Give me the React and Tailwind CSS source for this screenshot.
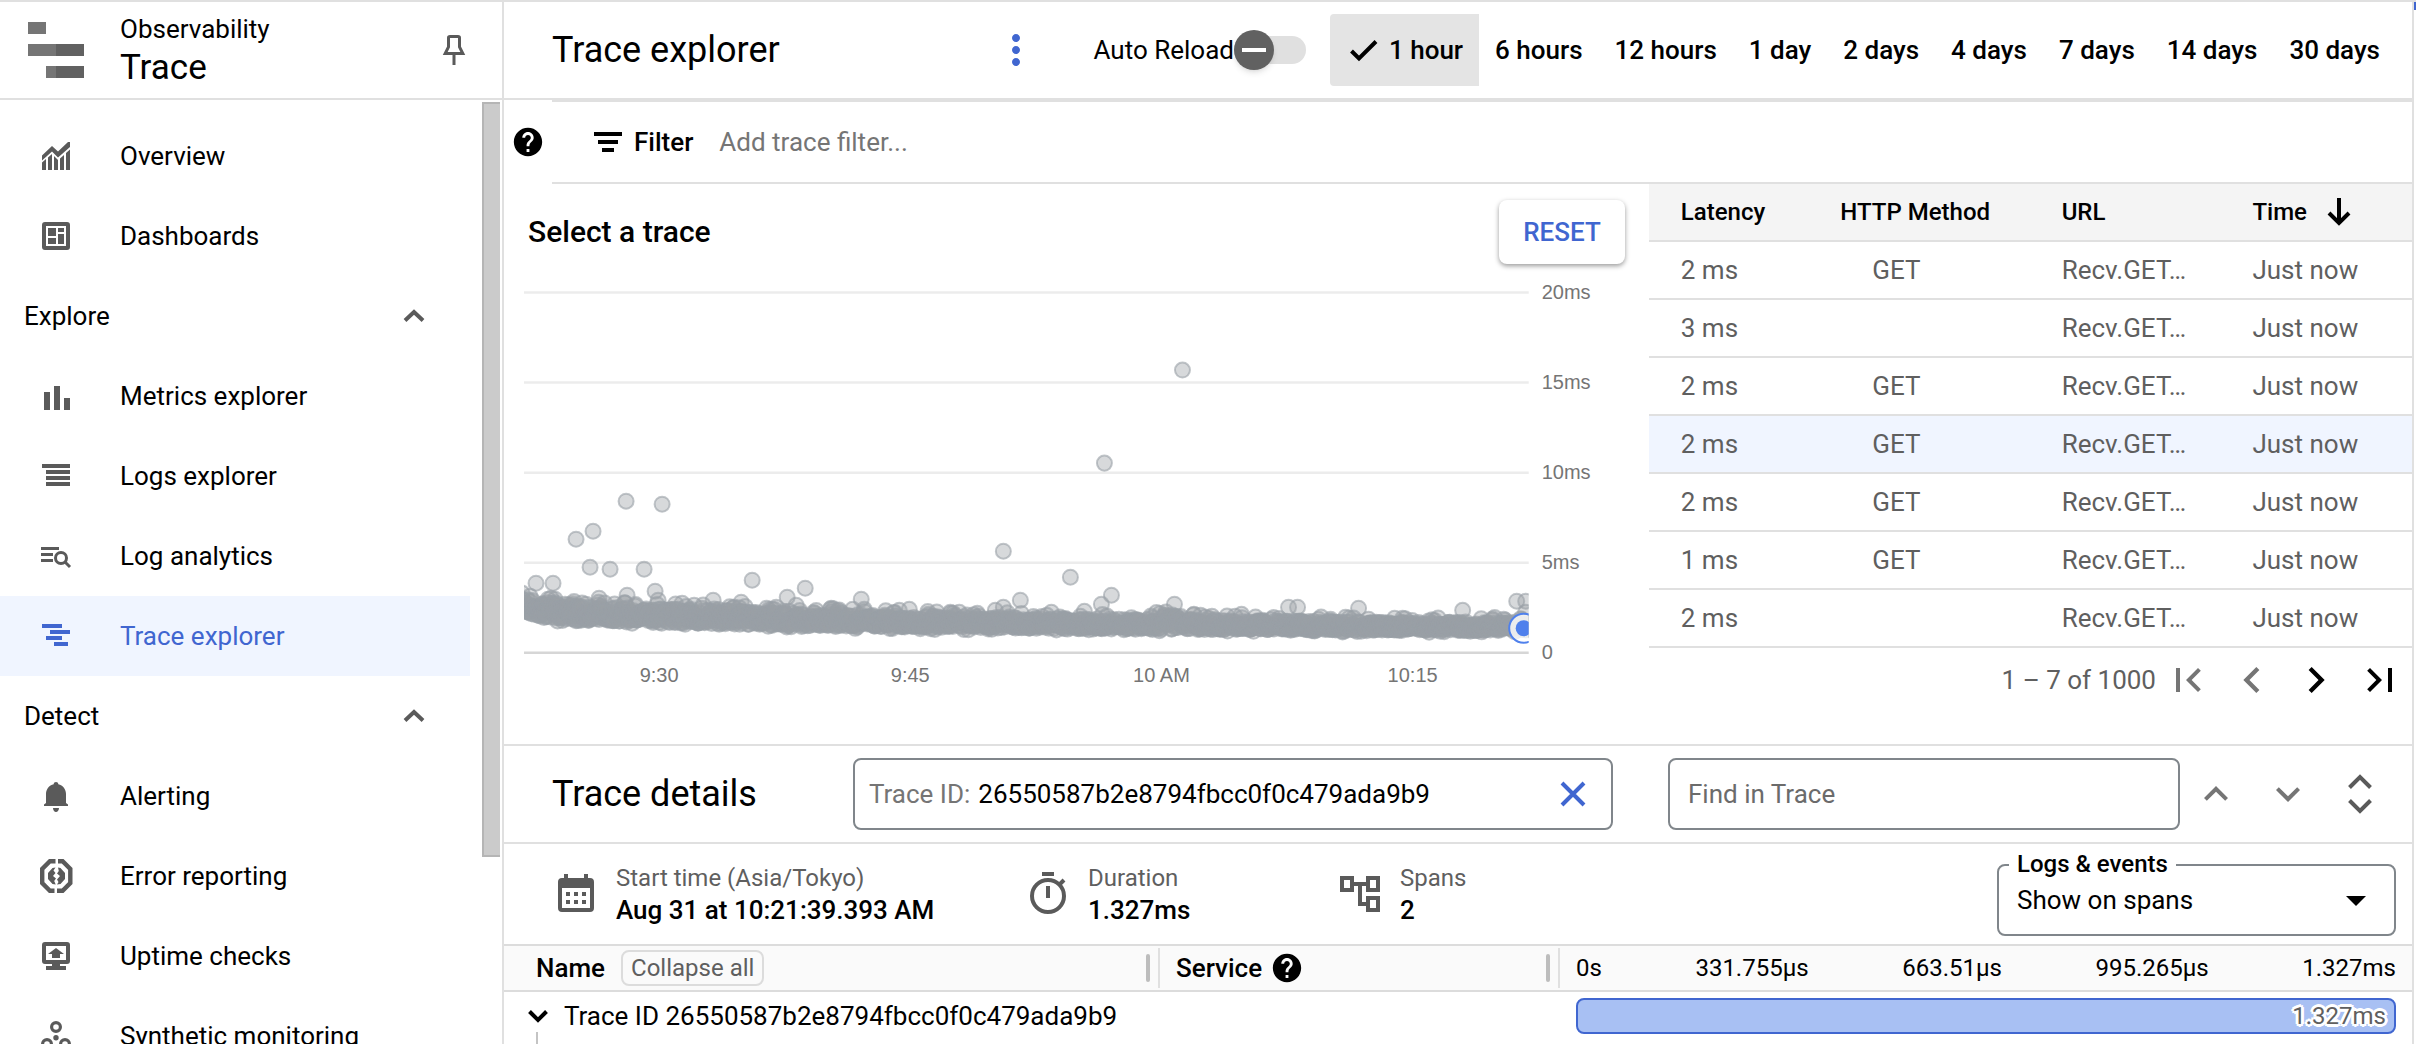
import React, { useState } from 'react';
import {
  MdHelp,
  MdMoreVert,
  MdFirstPage,
  MdLastPage,
  MdChevronLeft,
  MdChevronRight,
  MdExpandLess,
  MdExpandMore,
  MdArrowDropDown
} from 'react-icons/md';

const NavIcon = ({ children }) => (
  <svg viewBox="0 0 36 36" className="size-9 shrink-0" fill="currentColor" aria-hidden="true">
    {children}
  </svg>
);

const LineIcon = ({ d }) => (
  <svg viewBox="0 0 36 36" className="size-9 shrink-0" fill="none" stroke="currentColor" strokeWidth="4" aria-hidden="true">
    <path d={d} />
  </svg>
);

const icons = {
  overview: (
    <NavIcon>
      <path d="M4 17.5 14 8l6 5.5L30 4h2v5L20 19.5l-6-6-10 9z" />
      <path d="M4 24.5 8 21v11H4zM10 19.5l4-3.5v16h-4zM16 18l4 4v10h-4zM22 20.500l4-3.500v15h-4zM28 15l4-3.500V32h-4z" />
    </NavIcon>
  ),
  dashboards: (
    <NavIcon>
      <rect x="6" y="6" width="24" height="24" rx="1" fill="none" stroke="currentColor" strokeWidth="4" />
      <path d="M10 10h8v8h-8zM10 20h8v6h-8zM20 10h6v4h-6zM20 16h6v10h-6z" />
    </NavIcon>
  ),
  metrics: (
    <NavIcon>
      <path d="M6 14h6v18H6zM16 8h6v24h-6zM26 20h6v12h-6z" />
    </NavIcon>
  ),
  logs: (
    <NavIcon>
      <path d="M4 6h28v4H4zM8 12h24v4H8zM8 18h24v4H8zM8 24h24v4H8z" />
    </NavIcon>
  ),
  analytics: (
    <NavIcon>
      <path d="M3 9h18v3H3zM3 15h12v3H3zM3 21h12v3H3z" />
      <circle cx="23" cy="20" r="5.500" fill="none" stroke="currentColor" strokeWidth="3" />
      <path d="m26.500 23.500 5.500 5.500" stroke="currentColor" strokeWidth="3" />
    </NavIcon>
  ),
  trace: (
    <NavIcon>
      <path d="M4 6h20v4H4zM12 12h20v4H12zM8 18h16v4H8zM16 24h14v4H16z" />
    </NavIcon>
  ),
  alerting: (
    <NavIcon>
      <path d="M18 4c1.300 0 2.300.9 2.300 2.200 4.700 1.200 7.700 5 7.700 9.800v9l2 1.500V28H6v-1.500L8 25v-9c0-4.800 3-8.600 7.700-9.800C15.700 4.900 16.700 4 18 4zM15 30h6c0 2.200-1.300 4-3 4s-3-1.800-3-4z" />
    </NavIcon>
  ),
  errors: (
    <NavIcon>
      <path
        d="M17.500 3.200h-5.600L4.200 11v14l7.700 7.800h4.600M19 32.800h5.600l7.700-7.800V11l-7.700-7.800H20"
        fill="none"
        stroke="currentColor"
        strokeWidth="4.400"
      />
      <path d="M17.500 9.500 14.500 10 10 15v6l4.500 5 3.200.5-1.500-3.500 1.800-2.500-3-2.500 2.500-3-2-2.500zM20 9.500l2.500.5 4.500 5v6l-4.500 5-3.500.5 1.500-2.500-1.500-2.500 3-3.500-3-2.500 1.800-2.500z" />
    </NavIcon>
  ),
  uptime: (
    <NavIcon>
      <rect x="6" y="6" width="24" height="18" rx="1" fill="none" stroke="currentColor" strokeWidth="4" />
      <path d="M14 25h8v3h6v4H8v-4h6zM18 10l8 6h-4v4h-8v-4h-4z" />
    </NavIcon>
  ),
  synthetic: (
    <NavIcon>
      <g fill="none" stroke="currentColor" strokeWidth="3.200">
        <circle cx="18" cy="9" r="4.400" />
        <circle cx="9" cy="26" r="4.400" />
        <circle cx="27" cy="26" r="4.400" />
      </g>
      <circle cx="18" cy="19.700" r="2.700" />
    </NavIcon>
  )
};

const navGroups = [
  {
    items: [
      { label: 'Overview', icon: icons.overview },
      { label: 'Dashboards', icon: icons.dashboards }
    ]
  },
  {
    title: 'Explore',
    items: [
      { label: 'Metrics explorer', icon: icons.metrics },
      { label: 'Logs explorer', icon: icons.logs },
      { label: 'Log analytics', icon: icons.analytics },
      { label: 'Trace explorer', icon: icons.trace, active: true }
    ]
  },
  {
    title: 'Detect',
    items: [
      { label: 'Alerting', icon: icons.alerting },
      { label: 'Error reporting', icon: icons.errors },
      { label: 'Uptime checks', icon: icons.uptime },
      { label: 'Synthetic monitoring', icon: icons.synthetic }
    ]
  }
];

const Sidebar = () => (
  <aside className="flex w-[504px] shrink-0 flex-col border-r-2 border-[#e0e0e0]">
    <div className="flex h-[98px] shrink-0 items-center border-b-2 border-[#e0e0e0] pr-9 pl-7">
      <svg viewBox="0 0 56 56" className="size-14 shrink-0" aria-hidden="true">
        <path d="M0 0h18v12H0zM0 22h28v12H0zM18 44h10v12H18z" fill="#757575" />
        <path d="M28 22h28v12H28zM28 44h28v12H28z" fill="#616161" />
      </svg>
      <div className="ml-9 flex-1">
        <p className="text-[26px] leading-9">Observability</p>
        <p className="text-[35px] leading-[42px]">Trace</p>
      </div>
      <button type="button" aria-label="Pin menu" className="text-[#5a5a5a]">
        <svg viewBox="0 0 24 32" className="h-8 w-6" fill="none" stroke="currentColor" strokeWidth="3">
          <path d="M6.500 3.800Q6.500 2.500 8 2.500h8q1.500 0 1.500 1.300V13l3.300 6.500H3.200L6.500 13zM12 19.500V31" />
        </svg>
      </button>
    </div>
    <div className="flex min-h-0 flex-1 justify-between">
      <nav className="w-[470px] overflow-hidden pt-4">
        {navGroups.map((group, idx) => (
          <div key={idx}>
            {group.title && (
              <button type="button" className="flex h-20 w-full items-center justify-between pr-11 pl-6 text-[26px]">
                {group.title}
                <svg viewBox="0 0 24 16" className="h-4 w-6 text-[#5a5a5a]" fill="none" stroke="currentColor" strokeWidth="4">
                  <path d="m3 12.500 9-8.500 9 8.500" />
                </svg>
              </button>
            )}
            {group.items.map((item) => (
              <a
                key={item.label}
                href="#"
                className={`flex h-20 items-center gap-[46px] pl-[38px] text-[26px] whitespace-nowrap ${
                  item.active ? 'bg-[#f0f5ff] text-[#4066d0]' : ''
                }`}
              >
                <span className={item.active ? '' : 'text-[#5a5a5a]'}>{item.icon}</span>
                {item.label}
              </a>
            ))}
          </div>
        ))}
      </nav>
      <div className="mt-0.5 mr-0.5 h-4/5 w-[18px] border-y-2 border-l-2 border-[#b5b5b5] bg-[#cbcbcb]" />
    </div>
  </aside>
);

const ranges = ['1 hour', '6 hours', '12 hours', '1 day', '2 days', '4 days', '7 days', '14 days', '30 days'];

const TopBar = () => {
  const [range, setRange] = useState('1 hour');
  const [autoReload, setAutoReload] = useState(false);

  return (
    <header className="flex h-[98px] shrink-0 items-center border-b-2 border-[#e0e0e0] pr-4 pl-12">
      <h1 className="flex-1 text-4xl">Trace explorer</h1>
      <button type="button" aria-label="More actions" className="mr-[54px] text-[#4066d0]">
        <MdMoreVert className="size-12" />
      </button>
      <label className="mr-6 flex items-center text-[26px]">
        Auto Reload
        <input
          type="checkbox"
          checked={autoReload}
          onChange={(e) => setAutoReload(e.target.checked)}
          className="peer sr-only"
        />
        <span className="flex h-7 w-[72px] items-center rounded-full bg-[#e0e0e0]">
          <span className="flex size-10 items-center justify-center rounded-full bg-[#616161] shadow-md">
            <span className="h-1 w-6 bg-white" />
          </span>
        </span>
      </label>
      <div className="flex">
        {ranges.map((r) => (
          <button
            key={r}
            type="button"
            onClick={() => setRange(r)}
            className={`flex h-[72px] items-center gap-[7px] px-4 text-[26px] font-medium whitespace-nowrap ${
              r === range ? 'rounded-l bg-[#e4e4e4]' : ''
            }`}
          >
            {r === range && <LineIcon d="m5.500 19 7.500 7.500 17-17" />}
            {r}
          </button>
        ))}
      </div>
    </header>
  );
};

const FilterBar = () => (
  <div className="flex shrink-0 items-center">
    <button type="button" aria-label="Help" className="flex w-12 justify-center">
      <MdHelp className="size-[34px]" />
    </button>
    <div className="flex h-[84px] flex-1 items-center border-y-2 border-[#e0e0e0] pl-[38px]">
      <LineIcon d="M4 10h28M8 18h20M12 26h12" />
      <label htmlFor="trace-filter" className="ml-2 text-[26px] font-medium">Filter</label>
      <input
        id="trace-filter"
        type="text"
        placeholder="Add trace filter..."
        className="ml-[26px] flex-1 text-[26px] outline-none placeholder:text-[#757575]"
      />
    </div>
  </div>
);

// Outliers above the dense latency band, in chart units
const outliers = [
  [626, 501], [662, 504], [576, 539], [593, 531], [590, 567], [610, 569], [644, 569], [536, 583],
  [553, 583], [752, 580], [805, 588], [787, 597], [861, 599], [1003, 551], [1070, 577], [1020, 600],
  [655, 591], [627, 595], [599, 598], [658, 600], [530, 596], [555, 599], [713, 600], [741, 602],
  [682, 603], [694, 605], [1003, 607], [831, 608], [864, 609], [909, 609], [796, 605], [565, 604],
  [586, 604], [772, 609], [899, 610], [928, 614], [1051, 612], [1084, 611], [995, 610], [977, 613],
  [1182, 370], [1104, 463], [1111, 595], [1101, 604], [1174, 604], [1241, 614], [1288, 607],
  [1297, 607], [1358, 608], [1462, 610], [1516, 601], [1525, 601], [1525, 612], [1345, 617],
  [1200, 615], [1262, 620], [1330, 619], [1394, 618], [1402, 618], [1492, 620], [1503, 619]
];

const buildBand = () => {
  let seed = 7;
  const rand = () => {
    seed = (seed * 16807) % 2147483647;
    return seed / 2147483647;
  };
  const points = [];
  for (let x = 522; x < 1530; x += 0.5) {
    const t = (x - 524) / 1004;
    const bump = 5 * Math.exp(-(((x - 1170) / 18) ** 2));
    const edge = 9 * Math.exp(-(x - 522) / 12);
    const top = 602 + 21 * (1 - Math.exp(-2.4 * t)) + 1.5 * t - bump - edge;
    const bottom = 618 + 13 * (1 - Math.exp(-3 * t)) - edge;
    let y = top + (bottom - top) * Math.pow(rand(), 0.8);
    // a few stragglers roughen both edges of the band
    const stray = rand();
    if (stray < 0.05) y = top - rand() * 5;
    if (stray > 0.97) y = bottom + rand() * 2;
    points.push([x, y]);
  }
  return points;
};

const band = buildBand();

const LatencyChart = () => (
  <svg viewBox="504 280 1144 412" className="w-full" role="img" aria-label="Trace latency">
    <defs>
      <clipPath id="plot">
        <rect x="524" y="280" width="1004" height="373" />
      </clipPath>
    </defs>
    <g fontFamily="'Liberation Sans', Arial, sans-serif" fontSize="20" fill="#757575">
      {['20ms', '15ms', '10ms', '5ms', '0'].map((label, i) => (
        <g key={label}>
          <path d={`M524 ${292.5 + i * 90}h1004`} stroke={i === 4 ? '#d6d6d6' : '#ececec'} strokeWidth="2.500" />
          <text x="1541" y={299 + i * 90}>{label}</text>
        </g>
      ))}
      {[['9:30', 659], ['9:45', 910], ['10 AM', 1161], ['10:15', 1412]].map(([label, x]) => (
        <text key={label} x={x} y="682" textAnchor="middle">{label}</text>
      ))}
    </g>
    <g clipPath="url(#plot)">
      <g fill="#9aa0a6" fillOpacity="0.4" stroke="#9aa0a6" strokeOpacity="0.6" strokeWidth="2">
        {outliers.concat(band).map(([x, y], i) => (
          <circle key={i} cx={x} cy={y} r="7.500" />
        ))}
      </g>
      <circle cx="1523" cy="628" r="14.500" fill="#fff" fillOpacity="0.8" stroke="#4f80ec" strokeWidth="2" />
      <circle cx="1523" cy="628" r="8" fill="#4f80ec" />
    </g>
  </svg>
);

const traces = [
  { latency: '2 ms', method: 'GET' },
  { latency: '3 ms', method: '' },
  { latency: '2 ms', method: 'GET' },
  { latency: '2 ms', method: 'GET', selected: true },
  { latency: '2 ms', method: 'GET' },
  { latency: '1 ms', method: 'GET' },
  { latency: '2 ms', method: '' }
];

const TraceTable = () => (
  <div className="w-2/5">
    <table className="w-full table-fixed border-separate border-spacing-0 text-left">
      <thead className="bg-[#f4f4f4] text-2xl">
        <tr className="h-[58px] *:border-b-2 *:border-[#e0e0e0] *:p-0 *:font-medium">
          <th className="w-[23%]"><span className="pl-8">Latency</span></th>
          <th className="w-[29%]"><span className="pl-4">HTTP Method</span></th>
          <th className="w-[25%]"><span className="pl-4">URL</span></th>
          <th>
            <button type="button" className="flex items-center gap-3.5 pl-4">
              Time <LineIcon d="M18 4v25M8 19l10 10 10-10" />
            </button>
          </th>
        </tr>
      </thead>
      <tbody className="text-[26px] text-[#5f5f5f]">
        {traces.map((trace, idx) => (
          <tr
            key={idx}
            className={`h-[58px] *:border-b-2 *:border-[#e0e0e0] *:py-0 ${trace.selected ? 'bg-[#f0f5ff]' : ''}`}
          >
            <td className="pl-8">{trace.latency}</td>
            <td className="pl-12">{trace.method}</td>
            <td className="pl-4">Recv.GET…</td>
            <td className="pl-4">Just now</td>
          </tr>
        ))}
      </tbody>
    </table>
    <div className="flex h-16 items-center justify-end text-[26px] text-[#5f5f5f]">
      <span>1 – 7 of 1000</span>
      <button type="button" aria-label="First page" disabled className="flex w-16 justify-center text-[#757575]">
        <MdFirstPage className="size-12" />
      </button>
      <button type="button" aria-label="Previous page" disabled className="flex w-16 justify-center text-[#757575]">
        <MdChevronLeft className="size-[52px]" />
      </button>
      <button type="button" aria-label="Next page" className="flex w-16 justify-center text-black">
        <MdChevronRight className="size-[52px]" />
      </button>
      <button type="button" aria-label="Last page" className="flex w-16 justify-center text-black">
        <MdLastPage className="size-12" />
      </button>
    </div>
  </div>
);

const CalendarIcon = () => (
  <svg viewBox="0 0 48 48" className="size-12" fill="currentColor" aria-hidden="true">
    <path d="M12 4h4v4h16V4h4v4h2q4 0 4 4v26q0 4-4 4H10q-4 0-4-4V12q0-4 4-4h2zM10 18v20h28V18z" fillRule="evenodd" />
    <path d="M14 22h4v4h-4zM22 22h4v4h-4zM30 22h4v4h-4zM14 30h4v4h-4zM22 30h4v4h-4zM30 30h4v4h-4z" />
  </svg>
);

const StopwatchIcon = () => (
  <svg viewBox="0 0 48 48" className="size-12" fill="none" stroke="currentColor" strokeWidth="4" aria-hidden="true">
    <circle cx="24" cy="26" r="16" />
    <path d="M18 4h12M24 16v12M36 14l4-4" />
  </svg>
);

const SpansIcon = () => (
  <svg viewBox="0 0 48 48" className="size-12" fill="none" stroke="currentColor" strokeWidth="4" aria-hidden="true">
    <path d="M6 8h10v12H6zM32 8h10v12H32zM32 28h10v12H32zM16 14h16M24 14v20h8" />
  </svg>
);

const Fact = ({ icon, label, value, className }) => (
  <div className={`flex items-center gap-4 ${className}`}>
    <span className="text-[#5a5a5a]">{icon}</span>
    <div className="leading-8 whitespace-nowrap">
      <p className="text-2xl/8 text-[#5f5f5f]">{label}</p>
      <p className="text-[26px]/8 font-medium">{value}</p>
    </div>
  </div>
);

const TraceDetails = () => (
  <section className="flex min-h-0 flex-1 flex-col border-t-2 border-[#e0e0e0]">
    <div className="flex h-[98px] shrink-0 items-center border-b-2 border-[#e0e0e0] pr-4 pl-12">
      <h2 className="w-[301px] text-4xl">Trace details</h2>
      <div className="mr-[55px] flex h-[72px] flex-1 items-center rounded-lg border-2 border-[#80868b] pr-5 pl-3.5 text-[26px]">
        <label htmlFor="trace-id" className="text-[#757575]">Trace ID:</label>
        <input
          id="trace-id"
          type="text"
          defaultValue="26550587b2e8794fbcc0f0c479ada9b9"
          className="ml-2 min-w-0 flex-1 outline-none"
        />
        <button type="button" aria-label="Clear trace ID" className="text-[#4066d0]">
          <LineIcon d="m7 7 22 22M29 7 7 29" />
        </button>
      </div>
      <input
        type="text"
        aria-label="Find in Trace"
        placeholder="Find in Trace"
        className="h-[72px] w-[512px] rounded-lg border-2 border-[#80868b] px-[18px] text-[26px] outline-none placeholder:text-[#6b6b6b]"
      />
      <button type="button" aria-label="Previous match" className="flex w-[72px] justify-center text-[#757575]">
        <MdExpandLess className="size-12" />
      </button>
      <button type="button" aria-label="Next match" className="flex w-[72px] justify-center text-[#757575]">
        <MdExpandMore className="size-12" />
      </button>
      <button type="button" aria-label="Expand" className="flex w-[72px] justify-center text-[#5a5a5a]">
        <svg viewBox="0 0 48 48" className="size-12" fill="none" stroke="currentColor" strokeWidth="4">
          <path d="m13.500 17.500 10.500-10.500 10.500 10.500M13.500 30.500 24 41l10.500-10.500" />
        </svg>
      </button>
    </div>

    {/* Trace summary */}
    <div className="flex h-[100px] shrink-0 items-center pr-4 pl-12">
      <Fact icon={<CalendarIcon />} label="Start time (Asia/Tokyo)" value="Aug 31 at 10:21:39.393 AM" className="w-[472px]" />
      <Fact icon={<StopwatchIcon />} label="Duration" value="1.327ms" className="w-[312px]" />
      <Fact icon={<SpansIcon />} label="Spans" value="2" className="flex-1" />
      <div className="relative mt-3 w-[399px]">
        <label htmlFor="logs-events" className="absolute -top-4 left-3 bg-white px-2 text-2xl/8 font-medium">
          Logs &amp; events
        </label>
        <select
          id="logs-events"
          className="h-[72px] w-full appearance-none rounded-lg border-2 border-[#80868b] px-[18px] text-[26px] outline-none"
        >
          <option>Show on spans</option>
        </select>
        <MdArrowDropDown className="pointer-events-none absolute top-3 right-4 size-12" />
      </div>
    </div>

    {/* Span columns */}
    <div className="flex h-12 shrink-0 items-center border-y-2 border-[#dcdcdc] bg-[#fafafa] text-[26px]">
      <div className="flex w-[656px] items-center self-stretch py-0.5 pl-8">
        <span className="font-medium">Name</span>
        <button type="button" className="ml-4 h-9 rounded-lg border-2 border-[#dcdcdc] px-2 text-2xl/8 text-[#5f5f5f]">
          Collapse all
        </button>
        <span className="mr-2 ml-auto h-7 w-1 rounded-full bg-[#bdbdbd]" />
        <span className="h-full w-0.5 bg-[#e0e0e0]" />
      </div>
      <div className="flex w-[400px] items-center self-stretch py-0.5 pl-4">
        <span className="font-medium">Service</span>
        <MdHelp className="ml-2 size-[34px]" />
        <span className="mr-2 ml-auto h-7 w-1 rounded-full bg-[#bdbdbd]" />
        <span className="h-full w-0.5 bg-[#e0e0e0]" />
      </div>
      <div className="flex flex-1 justify-between px-4 text-2xl">
        <span>0s</span>
        <span>331.755µs</span>
        <span>663.51µs</span>
        <span>995.265µs</span>
        <span>1.327ms</span>
      </div>
    </div>
    <div className="flex h-12 shrink-0 items-center text-[26px]">
      <div className="flex w-[1056px] items-center pl-4">
        <button type="button" aria-label="Collapse trace" className="mr-2">
          <LineIcon d="m9.500 13.500 8.500 8.500 8.500-8.500" />
        </button>
        Trace ID 26550587b2e8794fbcc0f0c479ada9b9
      </div>
      <div className="flex-1 px-4">
        <div className="flex h-9 items-center justify-end rounded-lg border-2 border-[#4066d0] bg-[#a8c0f3] pr-2 text-2xl text-[#5f5f5f] [text-shadow:-2px_-2px_0_#fff,2px_-2px_0_#fff,-2px_2px_0_#fff,2px_2px_0_#fff,0_3px_0_#fff,0_-3px_0_#fff,3px_0_0_#fff,-3px_0_0_#fff]">
          1.327ms
        </div>
      </div>
    </div>
    <div className="-mt-2 ml-8 min-h-0 w-0.5 flex-1 bg-[#c4c4c4]" />
  </section>
);

const App = () => (
  <div className="flex h-screen overflow-hidden border-t-2 border-[#e0e0e0] bg-white font-[Roboto,sans-serif] text-black">
    <Sidebar />
    <main className="flex min-w-0 flex-1 flex-col border-r-2 border-[#e0e0e0]">
      <TopBar />
      <FilterBar />
      <section className="flex h-[560px] shrink-0">
        <div className="w-3/5 pt-4">
          <div className="flex h-20 items-start justify-between pr-6 pl-6">
            <h2 className="text-[30px] leading-16 font-medium">Select a trace</h2>
            <button type="button" className="h-16 rounded-lg px-6 text-[26px] font-medium text-[#4066d0] shadow-[0_2px_5px_rgba(0,0,0,0.4)]">
              RESET
            </button>
          </div>
          <LatencyChart />
        </div>
        <TraceTable />
      </section>
      <TraceDetails />
    </main>
    <div className="h-2 w-0.5 bg-[#4066d0]" />
  </div>
);

export default App;
